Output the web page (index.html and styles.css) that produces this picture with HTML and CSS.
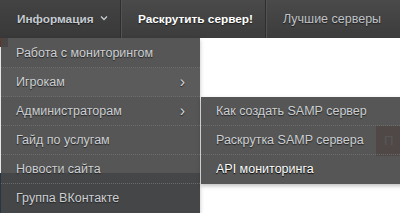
FILE: index.html
```html
<!DOCTYPE html>
<html lang="ru">
<head>
<meta charset="utf-8">
<link rel="stylesheet" href="styles.css">
</head>
<body>
<nav class="topnav">
  <div class="nav-item nav-info">Информация
    <svg class="caret" width="8" height="6" viewBox="0 0 8 6"><path d="M1 1.5 L4 4.5 L7 1.5" fill="none" stroke="#c8ccd0" stroke-width="1.3"/></svg>
  </div>
  <div class="nav-item nav-promo">Раскрутить сервер!</div>
  <div class="nav-item nav-best">Лучшие серверы</div>
</nav>
<main class="page">
  <div class="banner-edge"></div>
  <div class="content">
    <div class="content-row">
      <div class="spacer"></div>
      <div class="red-btn">П</div>
    </div>
    <div class="thumb"></div>
  </div>
</main>
<ul class="dropdown">
  <li class="dd-item">Работа с мониторингом</li>
  <li class="dd-item dd-hover">Игрокам <span class="chev">›</span></li>
  <li class="dd-item">Администраторам <span class="chev">›</span></li>
  <li class="dd-item">Гайд по услугам</li>
  <li class="dd-item">Новости сайта</li>
  <li class="dd-item dd-last">Группа ВКонтакте</li>
</ul>
<ul class="submenu">
  <li class="dd-item">Как создать SAMP сервер</li>
  <li class="dd-item">Раскрутка SAMP сервера</li>
  <li class="dd-item dd-active dd-last">API мониторинга</li>
</ul>
</body>
</html>
```
FILE: styles.css
```css
* { box-sizing: border-box; }
html, body { margin: 0; padding: 0; }
body {
  width: 400px;
  height: 213px;
  overflow: hidden;
  background: #ffffff;
  font-family: Arial, "Liberation Sans", sans-serif;
  position: relative;
}
.topnav {
  display: flex;
  height: 38px;
  background: linear-gradient(#4a4a4a, #3c3c3c);
  font-size: 12.5px;
}
.nav-item {
  display: flex;
  align-items: center;
  flex-shrink: 0;
  white-space: nowrap;
  padding: 0 17px 1px 17px;
  border-right: 1px solid #2e2e2e;
  box-shadow: 1px 0 0 #535353;
  text-shadow: 0 1px 1px #1e1e1e;
}
.nav-info {
  width: 121px;
  padding-right: 8px;
  color: #c5cbd2;
  font-weight: bold;
  font-size: 11.8px;
  background: linear-gradient(#434343, #393939);
}
.caret { flex-shrink: 0; margin-left: 6px; margin-top: -2px; }
.nav-promo {
  width: 145px;
  color: #ffffff;
  font-weight: bold;
  font-size: 11.8px;
}
.nav-best {
  color: #c0c4c8;
  border-right: none;
  box-shadow: none;
}
.page { display: flex; flex-direction: column; }
.banner-edge { height: 9px; width: 8px; background: #6b3a2c; }
.content { display: flex; flex-direction: column; }
.content-row { display: flex; height: 129px; padding-top: 79px; }
.spacer { flex: 1; }
.red-btn {
  width: 30px;
  height: 30px;
  margin-right: -6px;
  background: #b04a40;
  color: #fff;
  font-size: 13px;
  padding: 7px 0 0 8px;
}
.thumb { height: 40px; width: 200px; background: #2d3c4c; margin-top: -3px; }

.dropdown, .submenu {
  list-style: none;
  margin: 0;
  padding: 0;
  position: absolute;
  background: rgba(72, 72, 72, 0.92);
  font-size: 12.5px;
  box-shadow: 0 2px 4px rgba(0,0,0,0.25);
}
.dropdown { left: 1px; top: 38px; width: 199px; padding-top: 1px; }
.submenu { left: 201px; top: 97px; width: 205px; }
.dd-item {
  display: flex;
  align-items: center;
  justify-content: space-between;
  height: 29px;
  padding: 0 15px 1px 15px;
  color: #cdd0d3;
  text-shadow: 0 1px 1px #222;
  border-bottom: 1px dotted #6c6c6c;
  white-space: nowrap;
}
.dd-last { border-bottom: none; }
.dd-hover { background: rgba(100, 100, 100, 0.35); }
.dd-active { color: #ffffff; text-shadow: 0 1px 1px #000; }
.chev { color: #cfd2d5; font-size: 16px; line-height: 1; }
```
